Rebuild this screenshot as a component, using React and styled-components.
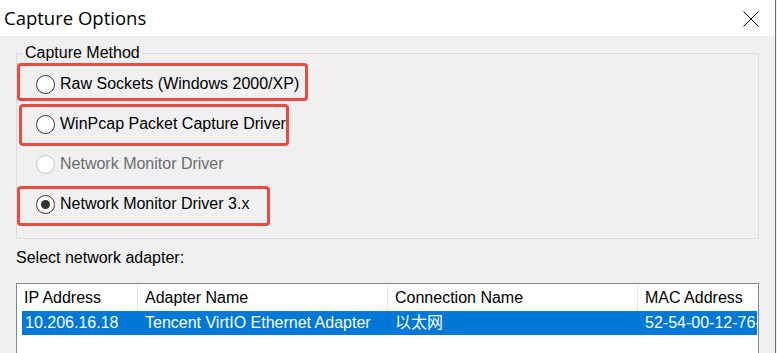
import React from "react";
import styled, { createGlobalStyle } from "styled-components";

const GlobalStyle = createGlobalStyle`
  html, body { margin: 0; padding: 0; background: #f0f0f0; }
  body { font-family: "Liberation Sans", Arial, sans-serif; }
  * { box-sizing: border-box; }
`;

const Window = styled.div`
  width: 776px;
  height: 353px;
  overflow: hidden;
  background: #f0f0f0;
  border-right: 1px solid #707070;
  display: flex;
  flex-direction: column;
`;

const TitleBar = styled.div`
  height: 36px;
  flex: none;
  background: #ffffff;
  display: flex;
  align-items: center;
  justify-content: space-between;
  padding-left: 4px;
  padding-right: 16px;
`;

const Title = styled.span`
  font-family: "Open Sans", "Noto Sans", sans-serif;
  font-size: 18.5px;
  color: #000;
  line-height: 22px;
  margin-top: -1px;
`;

const CloseIcon = styled.svg`
  width: 16px;
  height: 16px;
  display: block;
  margin-top: 1px;
`;

const Body = styled.div`
  padding: 8px 16px 0;
  font-size: 16px;
  color: #000;
`;

const GroupBox = styled.fieldset`
  margin: 0;
  padding: 2px 0 14px 19px;
  border: 1px solid #dcdcdc;
  min-width: 0;
`;

const Legend = styled.legend`
  margin-left: -13px;
  padding: 0 2px;
  font-size: 16px;
  line-height: 18px;
`;

const RadioRow = styled.div`
  position: relative;
  height: 40px;
  display: flex;
  align-items: center;
  gap: 5px;
  color: ${(p) => (p.disabled ? "#6d6d6d" : "#000")};
`;

const RadioCircle = styled.span`
  width: 19px;
  height: 19px;
  border-radius: 50%;
  border: 1px solid ${(p) => (p.disabled ? "#c4c4c4" : "#333")};
  background: #ffffff;
  display: flex;
  align-items: center;
  justify-content: center;
  flex: none;
  &::after {
    content: "";
    display: ${(p) => (p.checked ? "block" : "none")};
    width: 9px;
    height: 9px;
    border-radius: 50%;
    background: #333;
  }
`;

const Highlight = styled.span`
  position: absolute;
  border: 3px solid #ea4a3f;
  border-radius: 4px;
  pointer-events: none;
`;

const Caption = styled.div`
  margin: 10px 0 0;
  line-height: 18px;
`;

const ListView = styled.div`
  margin-top: 16px;
  height: 80px;
  border: 1px solid #828790;
  border-bottom: none;
  background: #ffffff;
  overflow: hidden;
`;

const HeaderRow = styled.div`
  display: grid;
  grid-template-columns: 121px 250px 250px 250px;
  height: 27px;
  padding-top: 1px;
`;

const HeaderCell = styled.div`
  display: flex;
  align-items: center;
  padding-left: 7px;
  border-right: 1px solid #e5e5e5;
  white-space: nowrap;
  line-height: 18px;
`;

const DataRow = styled.div`
  display: grid;
  grid-template-columns: 116px 250px 250px 250px;
  height: 24px;
  margin: 0 0 0 5px;
  width: 735px;
  background: ${(p) => (p.selected ? "#0078d7" : "transparent")};
  color: ${(p) => (p.selected ? "#ffffff" : "#000")};
  overflow: hidden;
`;

const DataCell = styled.div`
  display: flex;
  align-items: center;
  padding-left: ${(p) => (p.first ? "3px" : "7px")};
  white-space: nowrap;
  line-height: 18px;
  font-family: "Liberation Sans", Arial, "Noto Sans CJK SC", sans-serif;
`;

const methods = [
  { label: "Raw Sockets (Windows 2000/XP)", box: { left: -19, top: -1, width: 291, height: 38 } },
  { label: "WinPcap Packet Capture Driver", box: { left: -17, top: 0, width: 270, height: 42 } },
  { label: "Network Monitor Driver", disabled: true },
  { label: "Network Monitor Driver 3.x", checked: true, box: { left: -19, top: 2, width: 253, height: 40 } },
];

const columns = ["IP Address", "Adapter Name", "Connection Name", "MAC Address"];
const rows = [["10.206.16.18", "Tencent VirtIO Ethernet Adapter", "以太网", "52-54-00-12-76-8A"]];

export default function App() {
  return (
    <>
      <GlobalStyle />
      <Window>
        <TitleBar>
          <Title>Capture Options</Title>
          <CloseIcon viewBox="0 0 16 16">
            <path d="M0.5 0.5 L15.5 15.5 M15.5 0.5 L0.5 15.5" stroke="#000" strokeWidth="1" fill="none" />
          </CloseIcon>
        </TitleBar>
        <Body>
          <GroupBox>
            <Legend>Capture Method</Legend>
            {methods.map((m) => (
              <RadioRow key={m.label} disabled={m.disabled}>
                <RadioCircle checked={m.checked} disabled={m.disabled} />
                <span>{m.label}</span>
                {m.box && <Highlight style={m.box} />}
              </RadioRow>
            ))}
          </GroupBox>
          <Caption>Select network adapter:</Caption>
          <ListView>
            <HeaderRow>
              {columns.map((c) => (
                <HeaderCell key={c}>{c}</HeaderCell>
              ))}
            </HeaderRow>
            {rows.map((r) => (
              <DataRow key={r[0]} selected>
                {r.map((v, i) => (
                  <DataCell key={i} first={i === 0}>{v}</DataCell>
                ))}
              </DataRow>
            ))}
          </ListView>
        </Body>
      </Window>
    </>
  );
}
